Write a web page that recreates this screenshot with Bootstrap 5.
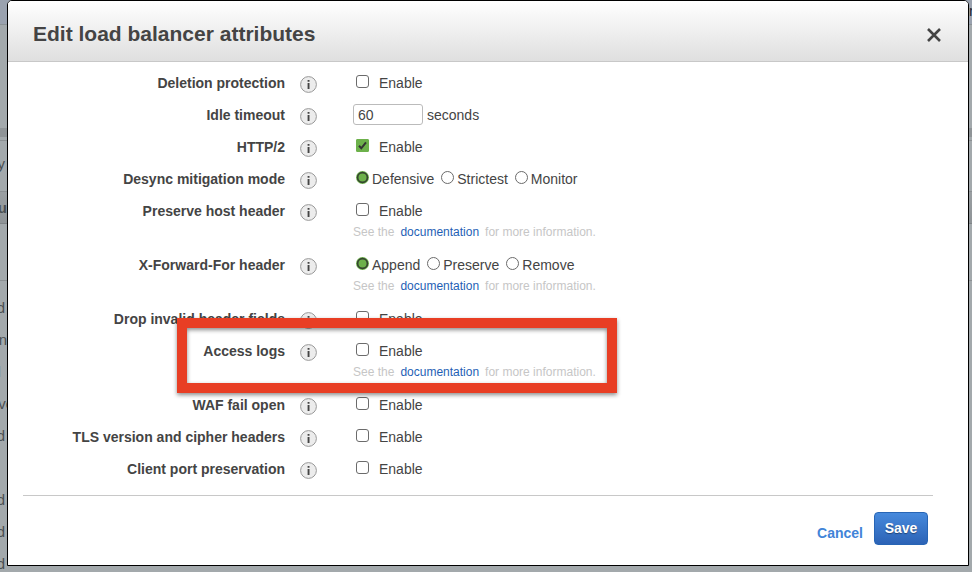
<!DOCTYPE html>
<html lang="en">
<head>
<meta charset="utf-8">
<meta name="viewport" content="width=device-width, initial-scale=1">
<title>Edit load balancer attributes</title>
<link href="https://cdn.jsdelivr.net/npm/bootstrap@5.3.0/dist/css/bootstrap.min.css" rel="stylesheet">
<style>
  body { font-family: "Liberation Sans", Arial, sans-serif; font-size: 14px; color: #444; background: #a3a9ac; line-height: 32px; }
  .page { padding: 0 3px 6px 7px; }

  /* Dimmed page behind the dialog */
  .backdrop-page { z-index: 0; color: #4a4f52; font-size: 15px; }
  .backdrop-page > div { flex: none; }
  .backdrop-page span { display: flex; justify-content: flex-end; white-space: nowrap; width: 5px; }
  .backdrop-page .wide { width: 14px; }
  .backdrop-page .bold-part { width: 7px; }
  .bg-top { height: 25px; background: #9aa2af; border-bottom: 1px solid #8b9296; line-height: 22px; }
  .backdrop-page > .bg-top { padding-left: calc(100% - 3px); color: #232a38; }
  .bg-blank { height: 103px; }
  .bg-divider { height: 13px; background: linear-gradient(#8f9497 9px, #a3a9ac 9px); border-bottom: 1px solid #8b9093; }
  .bg-tools { height: 51px; border-bottom: 1px solid #8b9093; line-height: 46px; }
  .bg-heading { height: 32px; background: linear-gradient(#9a9fa2, #8f9497); border-bottom: 1px solid #7f8487; font-weight: bold; }
  .bg-tabs { height: 57px; border-bottom: 1px solid #8b9093; }
  .bg-list { padding-top: 11px; }

  .dialog { z-index: 1; border: 1px solid #000; border-radius: 5px 5px 0 0; background: #fff; }
  .dialog-head { padding: 0 25px; height: 61px; background: linear-gradient(#fff, #dfdfdf); border-bottom: 1px solid #c8c8c8; border-radius: 4px 4px 0 0; }
  .dialog-head h1 { font-size: 21px; line-height: 24px; margin-top: 6px; }
  .close-btn { line-height: 0; color: #444; margin-top: 8px; }
  .dialog-main { padding: 5px 0 10px; }
  .dialog-foot { margin: 0 35px 0 15px; padding: 16px 5px 20px; border-top: 1px solid #c8c8c8; gap: 11px; }

  .field-name { width: 277px; text-align: right; font-weight: bold; }
  .info-btn { width: 17px; height: 17px; margin: 9px 36px 0 15px; line-height: 0; }
  .hint { font-size: 12px; line-height: 16px; color: #c6c6c6; margin-top: -3px; padding-bottom: 9px; gap: 6px; }
  .hint a { color: #1f5fb5; }

  .tick, .dot { appearance: none; width: 13px; height: 13px; margin: 8px 0 0 3px; border: 1px solid #6b6b6b; background: #fff; }
  .tick { border-radius: 3px; margin-right: 10px; }
  .tick:checked { border-color: #6db14b; border-radius: 1px; background: #6db14b url("data:image/svg+xml,%3Csvg xmlns='http://www.w3.org/2000/svg' viewBox='0 0 11 11'%3E%3Cpath d='M2 5.8 4.3 8.3 9 2.4' fill='none' stroke='%23333' stroke-width='2'/%3E%3C/svg%3E") center / 11px no-repeat; }
  .dot { border-radius: 50%; margin-right: 3px; }
  .dot:checked { border: 0; background: #6db14b url("data:image/svg+xml,%3Csvg xmlns='http://www.w3.org/2000/svg' viewBox='0 0 13 13'%3E%3Ccircle cx='6.5' cy='6.5' r='4.9' fill='none' stroke='%23354430' stroke-width='1.7'/%3E%3C/svg%3E") center / 13px no-repeat; }
  .choices { gap: 4px; }
  .timeout { width: 70px; height: 21px; margin: 5px 4px 0 0; padding: 0 4px; border: 1px solid #bbb; border-radius: 3px; color: #444; line-height: 19px; }

  .marker { left: 169px; top: -17px; width: 440px; height: 75px; border: 10px solid #e83e24; filter: drop-shadow(0 2px 2px rgba(0, 0, 0, .45)); pointer-events: none; }

  .cancel-link { color: #4184d8; line-height: 20px; margin-top: 8px; }
  .save-btn { width: 54px; height: 33px; padding: 0; border: 1px solid #2765b5; border-radius: 4px; color: #fff; font-size: 14px; line-height: 31px; background: linear-gradient(#4689dc, #2c63b6); text-shadow: 0 1px 1px rgba(0, 0, 0, .4); }
</style>
</head>
<body>
<svg class="d-none" aria-hidden="true">
  <symbol id="info" viewBox="0 0 17 17">
    <circle cx="8.5" cy="8.5" r="7.9" fill="#ececec" stroke="#999" stroke-width="1"/>
    <path d="M7.6 4h1.9v1.8H7.6zM7.6 7h1.9v6H7.6z" fill="#444"/>
  </symbol>
</svg>

<div class="page position-relative overflow-hidden min-vh-100 d-flex flex-column">
  <div class="backdrop-page position-absolute top-0 start-0 w-100 h-100 overflow-hidden d-flex flex-column" aria-hidden="true">
    <div class="bg-top">r</div>
    <div class="bg-blank"></div>
    <div class="bg-divider"></div>
    <div class="bg-tools"><span>y</span></div>
    <div class="bg-heading"><span class="bold-part">u</span></div>
    <div class="bg-tabs"></div>
    <div class="bg-list"><span>d</span><span class="bold-part">n</span><span>l&nbsp;</span><span class="wide">ve</span><span>d</span><span>&nbsp;</span><span>d</span><span>d</span><span>d</span></div>
  </div>

  <main class="dialog position-relative flex-grow-1" role="dialog" aria-labelledby="title">
    <header class="dialog-head d-flex align-items-center justify-content-between">
      <h1 id="title" class="fw-bold mb-0">Edit load balancer attributes</h1>
      <button type="button" class="close-btn border-0 bg-transparent p-0" aria-label="Close">
        <svg width="18" height="18" viewBox="0 0 18 18"><path d="M3 3 15 15M15 3 3 15" stroke="currentColor" stroke-width="2.6" fill="none"/></svg>
      </button>
    </header>

    <form>
      <div class="dialog-main">
        <div class="d-flex align-items-start">
          <label class="field-name" for="deletion">Deletion protection</label>
          <button type="button" class="info-btn border-0 bg-transparent p-0" aria-label="About deletion protection"><svg width="17" height="17"><use href="#info"/></svg></button>
          <label class="d-flex align-items-start"><input class="tick" type="checkbox" id="deletion">Enable</label>
        </div>
        <div class="d-flex align-items-start">
          <label class="field-name" for="timeout">Idle timeout</label>
          <button type="button" class="info-btn border-0 bg-transparent p-0" aria-label="About idle timeout"><svg width="17" height="17"><use href="#info"/></svg></button>
          <div class="d-flex align-items-start"><input class="timeout" type="text" id="timeout" value="60">seconds</div>
        </div>
        <div class="d-flex align-items-start">
          <label class="field-name" for="http2">HTTP/2</label>
          <button type="button" class="info-btn border-0 bg-transparent p-0" aria-label="About HTTP/2"><svg width="17" height="17"><use href="#info"/></svg></button>
          <label class="d-flex align-items-start"><input class="tick" type="checkbox" id="http2" checked>Enable</label>
        </div>
        <div class="d-flex align-items-start" role="radiogroup" aria-labelledby="desync-name">
          <div class="field-name" id="desync-name">Desync mitigation mode</div>
          <button type="button" class="info-btn border-0 bg-transparent p-0" aria-label="About desync mitigation mode"><svg width="17" height="17"><use href="#info"/></svg></button>
          <div class="choices d-flex">
            <label class="d-flex align-items-start"><input class="dot" type="radio" name="desync" checked>Defensive</label>
            <label class="d-flex align-items-start"><input class="dot" type="radio" name="desync">Strictest</label>
            <label class="d-flex align-items-start"><input class="dot" type="radio" name="desync">Monitor</label>
          </div>
        </div>
        <div class="d-flex align-items-start">
          <label class="field-name" for="preserve">Preserve host header</label>
          <button type="button" class="info-btn border-0 bg-transparent p-0" aria-label="About preserve host header"><svg width="17" height="17"><use href="#info"/></svg></button>
          <div>
            <label class="d-flex align-items-start"><input class="tick" type="checkbox" id="preserve">Enable</label>
            <div class="hint d-flex"><span>See the</span><a class="text-decoration-none" href="#">documentation</a><span>for more information.</span></div>
          </div>
        </div>
        <div class="d-flex align-items-start" role="radiogroup" aria-labelledby="xff-name">
          <div class="field-name" id="xff-name">X-Forward-For header</div>
          <button type="button" class="info-btn border-0 bg-transparent p-0" aria-label="About X-Forward-For header"><svg width="17" height="17"><use href="#info"/></svg></button>
          <div>
            <div class="choices d-flex">
              <label class="d-flex align-items-start"><input class="dot" type="radio" name="xff" checked>Append</label>
              <label class="d-flex align-items-start"><input class="dot" type="radio" name="xff">Preserve</label>
              <label class="d-flex align-items-start"><input class="dot" type="radio" name="xff">Remove</label>
            </div>
            <div class="hint d-flex"><span>See the</span><a class="text-decoration-none" href="#">documentation</a><span>for more information.</span></div>
          </div>
        </div>
        <div class="d-flex align-items-start">
          <label class="field-name" for="drop">Drop invalid header fields</label>
          <button type="button" class="info-btn border-0 bg-transparent p-0" aria-label="About drop invalid header fields"><svg width="17" height="17"><use href="#info"/></svg></button>
          <label class="d-flex align-items-start"><input class="tick" type="checkbox" id="drop">Enable</label>
        </div>
        <div class="d-flex align-items-start position-relative">
          <label class="field-name" for="logs">Access logs</label>
          <button type="button" class="info-btn border-0 bg-transparent p-0" aria-label="About access logs"><svg width="17" height="17"><use href="#info"/></svg></button>
          <div>
            <label class="d-flex align-items-start"><input class="tick" type="checkbox" id="logs">Enable</label>
            <div class="hint d-flex"><span>See the</span><a class="text-decoration-none" href="#">documentation</a><span>for more information.</span></div>
          </div>
          <div class="marker position-absolute"></div>
        </div>
        <div class="d-flex align-items-start">
          <label class="field-name" for="waf">WAF fail open</label>
          <button type="button" class="info-btn border-0 bg-transparent p-0" aria-label="About WAF fail open"><svg width="17" height="17"><use href="#info"/></svg></button>
          <label class="d-flex align-items-start"><input class="tick" type="checkbox" id="waf">Enable</label>
        </div>
        <div class="d-flex align-items-start">
          <label class="field-name" for="tls">TLS version and cipher headers</label>
          <button type="button" class="info-btn border-0 bg-transparent p-0" aria-label="About TLS version and cipher headers"><svg width="17" height="17"><use href="#info"/></svg></button>
          <label class="d-flex align-items-start"><input class="tick" type="checkbox" id="tls">Enable</label>
        </div>
        <div class="d-flex align-items-start">
          <label class="field-name" for="port">Client port preservation</label>
          <button type="button" class="info-btn border-0 bg-transparent p-0" aria-label="About client port preservation"><svg width="17" height="17"><use href="#info"/></svg></button>
          <label class="d-flex align-items-start"><input class="tick" type="checkbox" id="port">Enable</label>
        </div>
      </div>

      <footer class="dialog-foot d-flex justify-content-end align-items-center">
        <a class="cancel-link fw-bold text-decoration-none" href="#">Cancel</a>
        <button type="submit" class="save-btn fw-bold">Save</button>
      </footer>
    </form>
  </main>
</div>
<script src="https://cdn.jsdelivr.net/npm/bootstrap@5.3.0/dist/js/bootstrap.bundle.min.js"></script>
</body>
</html>
